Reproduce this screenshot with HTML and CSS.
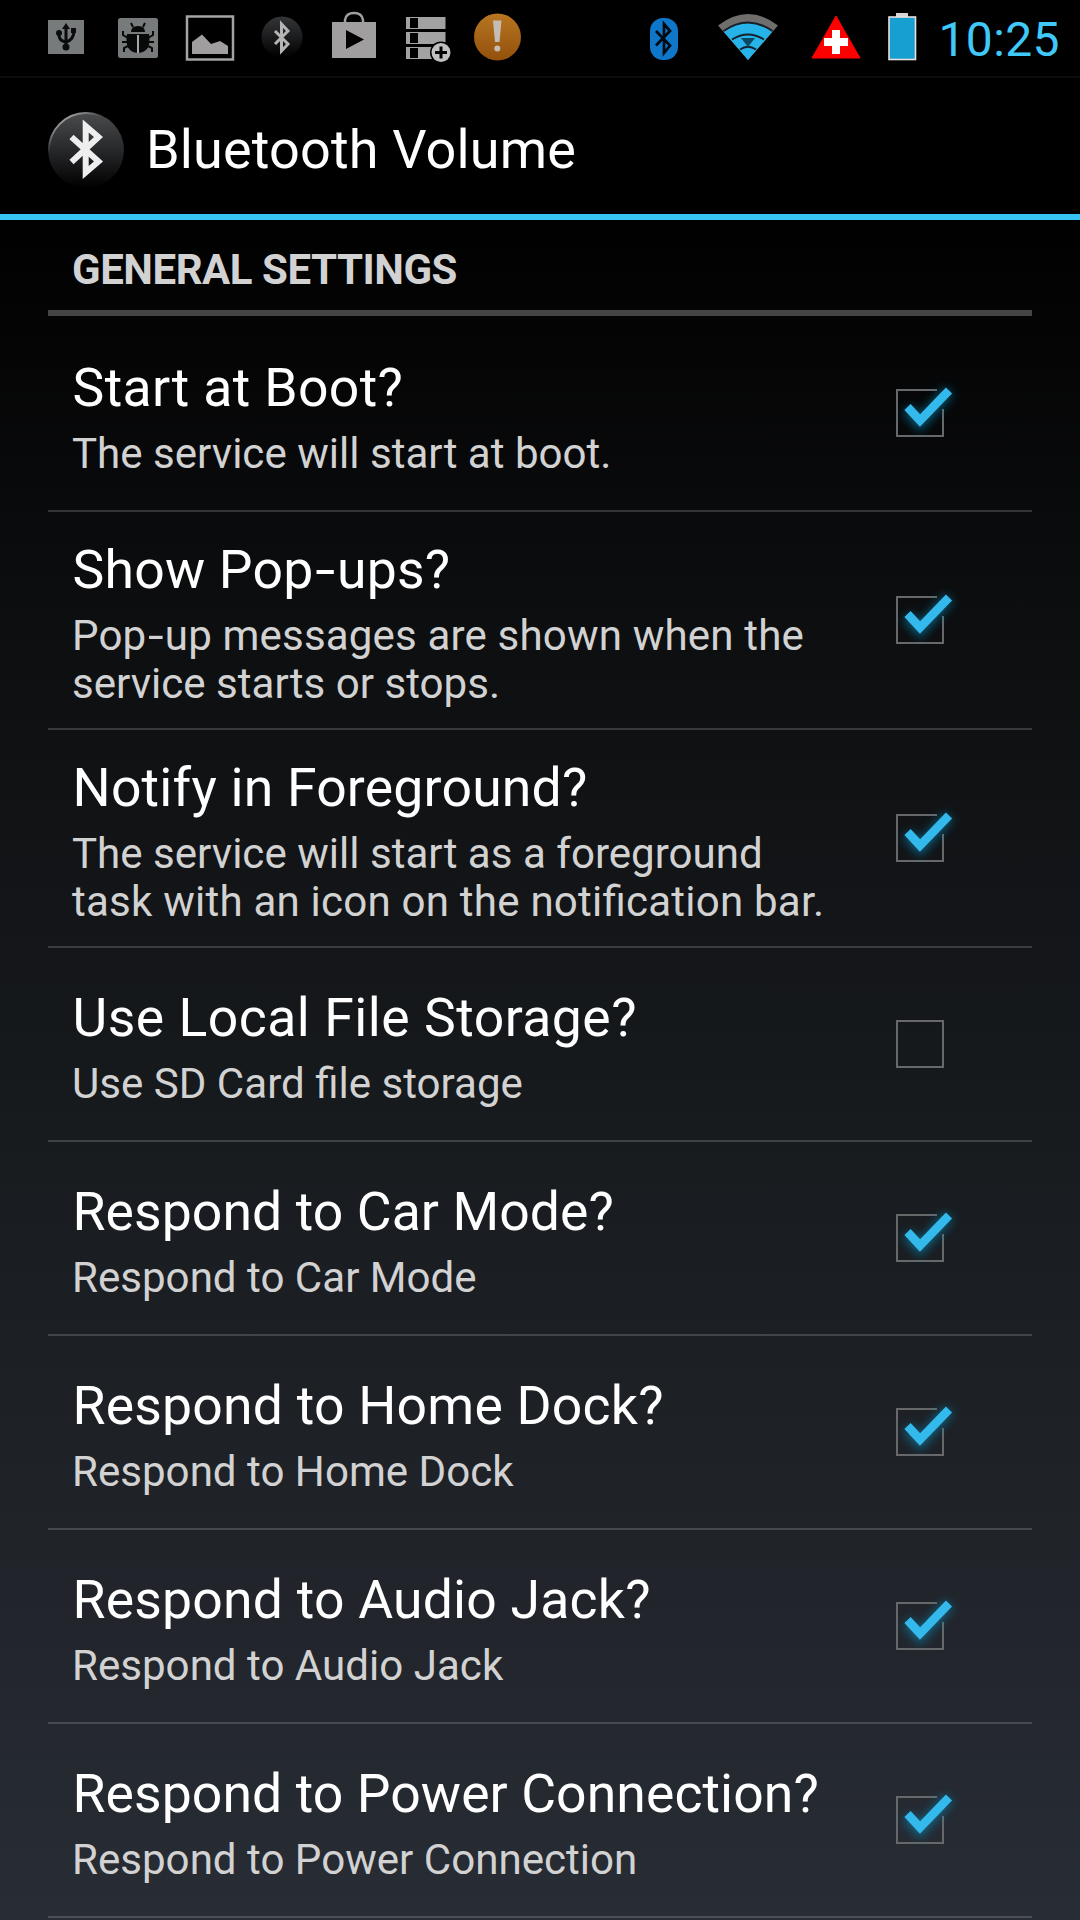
FILE: index.html
```html
<!DOCTYPE html>
<html lang="en">
<head>
<meta charset="utf-8">
<title>Bluetooth Volume</title>
<link rel="stylesheet" href="styles.css">
</head>
<body>
<svg class="defs" width="0" height="0" aria-hidden="true">
  <defs>
    <linearGradient id="orb" x1="0" y1="0" x2="0" y2="1"><stop offset="0" stop-color="#4b4c4e"/><stop offset=".5" stop-color="#27282a"/><stop offset="1" stop-color="#000"/></linearGradient>
    <linearGradient id="rim" x1="0" y1="0" x2=".5" y2=".7"><stop offset="0" stop-color="#ddd"/><stop offset=".5" stop-color="#ddd" stop-opacity="0"/></linearGradient>
    <linearGradient id="amber" x1="0" y1="0" x2="0" y2="1"><stop offset="0" stop-color="#b87622"/><stop offset="1" stop-color="#92500c"/></linearGradient>
    <filter id="glow" x="-50%" y="-50%" width="200%" height="200%"><feGaussianBlur stdDeviation="5"/></filter>
    <symbol id="box-on" viewBox="0 0 80 80">
      <path d="M57 17H17V63H63V36" fill="none" stroke="#66686a" stroke-width="2"/>
      <path d="M27 36L40 50L69 18" fill="none" stroke="#0787b5" stroke-width="12" opacity=".6" filter="url(#glow)"/>
      <path d="M27.500 34L40 47.500L69 17.500" fill="none" stroke="#33b9ec" stroke-width="8.500"/>
    </symbol>
    <symbol id="box-off" viewBox="0 0 80 80">
      <path d="M17 17H63V63H17Z" fill="none" stroke="#66686a" stroke-width="2"/>
    </symbol>
  </defs>
</svg>
<header class="status">
  <svg class="tray" width="490" height="76" viewBox="40 0 490 76">
    <g><rect x="48" y="20" width="36" height="34" fill="#777b7b"/>
      <path d="M66 27V49M59 32V35Q59 41 66 42Q74 40 74 30" fill="none" stroke="#0b0d0d" stroke-width="3"/><path d="M62 29L66 23L70 29Z" fill="#0b0d0d"/><circle cx="59" cy="33" r="3" fill="#0b0d0d"/><rect x="71" y="28" width="5" height="5" fill="#0b0d0d"/><circle cx="66" cy="47" r="3.500" fill="#0b0d0d"/></g>
    <g><rect x="118" y="18" width="40" height="40" rx="2.500" fill="#777b7b"/>
      <path d="M131 32Q131 26 138 26Q145 26 145 32ZM127 34H149Q152 52 138 53Q124 52 127 34Z" fill="#080909"/><path d="M133 27L131 23M143 27L145 23M128 38L123 35V31M148 38L153 35V31M127 42H122M149 42H154M128 46L124 48V52M148 46L152 48V52" fill="none" stroke="#080909" stroke-width="2"/><path d="M138 35V53" stroke="#a5a8a8" stroke-width="2"/><path d="M129 33H147" stroke="#777b7b" stroke-width="1"/></g>
    <g><rect x="187" y="16.500" width="46" height="43" fill="none" stroke="#a4a3a1" stroke-width="2.500"/><path d="M192 54V42L202 34.500L211 44L220 41L228 46V54Z" fill="#a09e9e"/></g>
    <g><circle cx="282" cy="37" r="20.500" fill="url(#orb)" opacity=".7"/><path d="M275 31L288 44L281.500 51V24L288 31L275 44" fill="none" stroke="#b5b5b5" stroke-width="3"/></g>
    <g><path d="M345 23V20Q346 13 354 13Q362 13 363 20V23" fill="none" stroke="#a09e9f" stroke-width="2.500"/><path d="M332 22H376V58H332ZM346 30V49L364 39.500Z" fill="#a09e9f" fill-rule="evenodd"/></g>
    <g fill="#a3a2a2"><path d="M406 17H445.500V29H406ZM410 18V28H418V18ZM406 32H445.500V44H406ZM410 33V43H418V33ZM406 47H445.500V59H406ZM410 48V58H418V48Z" fill-rule="evenodd"/><circle cx="441" cy="52.500" r="11" fill="#000"/><circle cx="441" cy="52.500" r="9.500" fill="#c0c0c0"/><path d="M441 46.500V58.500M435 52.500H447" stroke="#000" stroke-width="3"/></g>
    <g><circle cx="497.500" cy="37" r="23.500" fill="url(#amber)"/><path d="M493 20.500H501.500L499.500 42H495Z" fill="#c4bdb6"/><circle cx="497.300" cy="48.500" r="3" fill="#c4bdb6"/></g>
  </svg>
  <div class="system">
    <svg width="270" height="76" viewBox="650 0 270 76">
      <rect x="650" y="18" width="28" height="42" rx="13" fill="#0f77c9"/><path d="M656 31L670 45.500L664 53V24L670 31L656 45.500" fill="none" stroke="#020a12" stroke-width="2.700"/>
      <path d="M718 25.500Q748 2.500 778 25.500L748 60Z" fill="#6f6e6d"/><path d="M724 32Q748 14.500 772 32L748 60Z" fill="#25b3ea"/>
      <path d="M723.500 31Q748 14 772.500 31M732 39.500Q748 29.500 764 39.500M740 49.500Q748 44 756 49.500" fill="none" stroke="#152029" stroke-width="2"/><path d="M741 38H755L748 47Z" fill="#0b4963"/>
      <path d="M836 16L860 58H812Z" fill="#fe0000" stroke="#fe0000" stroke-linejoin="round"/><path d="M836 30V54M824 42H848" stroke="#fff" stroke-width="8"/>
      <path d="M896 13H908V17H896Z" fill="#d8d4d4"/><rect x="889" y="17" width="26.500" height="42.500" fill="#189fd2" stroke="#eadfdc" stroke-width="1.600"/>
    </svg>
    <span class="clock">10:25</span>
  </div>
</header>
<div class="appbar">
  <svg class="logo" width="78" height="78" viewBox="0 0 78 78"><circle cx="38" cy="39" r="38" fill="url(#orb)"/><circle cx="38" cy="39" r="37" fill="none" stroke="url(#rim)" stroke-width="2"/><path d="M23.500 26L50.500 50.500L37.700 61.500V15L50.500 26L23.500 51" fill="none" stroke="#eee" stroke-width="6"/></svg>
  <h1>Bluetooth Volume</h1>
</div>
<main>
  <h2>GENERAL SETTINGS</h2>
  <ul class="prefs">
    <li class="boot"><div class="text"><h3>Start at Boot?</h3><p>The service will start at boot.</p></div><svg class="check"><use href="#box-on"/></svg></li>
    <li class="popups tall"><div class="text"><h3>Show Pop<span class="dash">-</span>ups?</h3><p><span class="loose">Pop<span class="dash">-</span>up messages are shown when the</span><br>service starts or stops.</p></div><svg class="check"><use href="#box-on"/></svg></li>
    <li class="notify tall"><div class="text"><h3>Notify in Foreground?</h3><p>The service will start as a foreground<br><span class="loose">task with an icon on the notification bar.</span></p></div><svg class="check"><use href="#box-on"/></svg></li>
    <li class="storage"><div class="text"><h3>Use Local File Storage?</h3><p>Use SD Card file storage</p></div><svg class="check"><use href="#box-off"/></svg></li>
    <li class="car"><div class="text"><h3>Respond to Car Mode?</h3><p>Respond to Car Mode</p></div><svg class="check"><use href="#box-on"/></svg></li>
    <li><div class="text"><h3>Respond to Home Dock?</h3><p>Respond to Home Dock</p></div><svg class="check"><use href="#box-on"/></svg></li>
    <li><div class="text"><h3>Respond to Audio Jack?</h3><p>Respond to Audio Jack</p></div><svg class="check"><use href="#box-on"/></svg></li>
    <li class="power"><div class="text"><h3>Respond to Power Connection?</h3><p>Respond to Power Connection</p></div><svg class="check"><use href="#box-on"/></svg></li>
  </ul>
</main>
</body>
</html>
```
FILE: styles.css
```css
* { box-sizing: border-box; margin: 0; padding: 0; }
body {
  width: 1080px;
  height: 1920px;
  overflow: hidden;
  font-family: Roboto, sans-serif;
  color: #fff;
  background: linear-gradient(#000 0, #000 200px, #0d0e10 620px, #16191c 1060px, #282c34 1920px);
}
.defs { position: absolute; }
.status {
  display: flex;
  justify-content: space-between;
  height: 78px;
  padding: 0 20px 0 40px;
  background: #000;
  border-bottom: 2px solid #0c0e0e;
}
.system { display: flex; gap: 18px; }
.clock {
  font-size: 48px;
  line-height: 79px;
  letter-spacing: .4px;
  color: #3fc8f8;
  white-space: nowrap;
}
.appbar {
  display: flex;
  align-items: center;
  gap: 20px;
  height: 142px;
  padding: 7px 48px 0;
  border-bottom: 6px solid #35c4f4;
}
h1 {
  font-size: 54px;
  font-weight: 400;
  line-height: 64px;
  letter-spacing: .15px;
  white-space: nowrap;
}
main { padding: 0 48px; }
h2 {
  height: 96px;
  padding-left: 24px;
  font-size: 42px;
  font-weight: 700;
  line-height: 99px;
  letter-spacing: -.47px;
  color: #d2d2d2;
  border-bottom: 6px solid #444;
}
.prefs { list-style: none; }
.prefs li {
  display: flex;
  align-items: center;
  justify-content: space-between;
  height: 194px;
  padding: 0 72px 0 24px;
  border-bottom: 2px solid rgba(255, 255, 255, .17);
}
.prefs li.boot { height: 196px; }
.prefs li.tall { height: 218px; }
.text { padding-top: 6px; white-space: nowrap; }
.boot .text { padding-top: 8px; }
h3 {
  padding-left: .5px;
  font-size: 53.500px;
  font-weight: 400;
  line-height: 62px;
  letter-spacing: .22px;
}
.boot h3 { letter-spacing: .36px; }
.storage h3 { letter-spacing: .5px; }
.car h3, .power h3 { letter-spacing: .09px; }
p {
  margin-top: 11px;
  font-size: 42.100px;
  line-height: 48px;
  color: #d2d2d2;
}
.loose { letter-spacing: .14px; font-feature-settings: "liga" 1; }
.notify .loose { letter-spacing: .2px; }
.dash { display: inline-block; margin: 0 .08em; transform: scaleX(1.35); }
.check { width: 80px; height: 80px; flex: none; }
```
